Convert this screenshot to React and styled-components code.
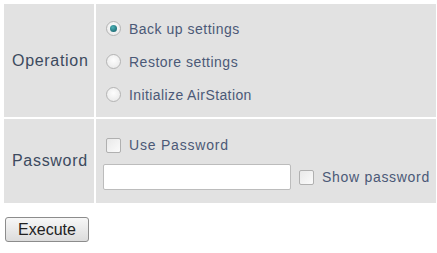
import styled, { createGlobalStyle } from "styled-components"

const Global = createGlobalStyle`
    html, body {
        margin: 0;
        padding: 0;
        background: #fff;
        font-family: "Liberation Sans", Arial, sans-serif;
    }
`

const Page = styled.div`
    padding: 4px 0 0 4px;
`

const Form = styled.div`
    display: grid;
    grid-template-columns: 90px 1fr;
    grid-template-rows: 113px 84px;
    gap: 2px;
    width: 432px;
`

const Label = styled.div`
    background: #e2e2e2;
    display: flex;
    align-items: center;
    padding-left: 8px;
    font-size: 16px;
    letter-spacing: 0.7px;
    color: #3c4a5e;
`

const Cell = styled.div`
    background: #e2e2e2;
    display: flex;
    flex-direction: column;
    padding: ${p => p.$pad};
`

const Option = styled.label`
    display: flex;
    align-items: center;
    height: ${p => p.$h || 33}px;
    padding-left: ${p => p.$indent || 0}px;
    font-size: 14px;
    letter-spacing: ${p => p.$ls || 0.5}px;
    white-space: nowrap;
    color: #4b5977;
    gap: 8px;
`

const Radio = styled.span`
    width: 13px;
    height: 13px;
    border-radius: 50%;
    border: 1px solid #b4b4b4;
    background: radial-gradient(circle at 50% 40%, #fdfdfd 0%, #e6e6e6 100%);
    display: flex;
    align-items: center;
    justify-content: center;
    flex-shrink: 0;
    &::after {
        content: "";
        width: 7px;
        height: 7px;
        border-radius: 50%;
        background: ${p => (p.$on ? "radial-gradient(circle at 40% 35%, #4fb3b8 0%, #14606a 90%)" : "transparent")};
    }
`

const Check = styled.span`
    width: 13px;
    height: 13px;
    border: 1px solid #b0b0b0;
    border-radius: 2px;
    background: linear-gradient(135deg, #e9e9e9 0%, #fbfbfb 100%);
    flex-shrink: 0;
`

const InputRow = styled.div`
    display: flex;
    align-items: center;
    margin-top: 7px;
`

const TextInput = styled.input`
    width: 188px;
    height: 26px;
    flex-shrink: 0;
    box-sizing: border-box;
    border: 1px solid #bcbcbc;
    border-radius: 2px;
    background: #fff;
    margin: 0 8px 0 0;
    padding: 0 4px;
    outline: none;
`

const Button = styled.button`
    margin-top: 14px;
    margin-left: 1px;
    width: 84px;
    height: 25px;
    border: 1px solid #8c8c8c;
    border-radius: 3px;
    background: linear-gradient(#f7f7f7, #dcdcdc);
    font-family: "Liberation Sans", Arial, sans-serif;
    font-size: 16px;
    color: #222;
    padding: 0;
`

export default function App() {
    return (
        <Page>
            <Global />
            <Form>
                <Label>Operation</Label>
                <Cell $pad="8px 10px 5px 10px">
                    <Option><Radio $on />Back up settings</Option>
                    <Option><Radio />Restore settings</Option>
                    <Option $ls={0.4}><Radio />Initialize AirStation</Option>
                </Cell>
                <Label>Password</Label>
                <Cell $pad="14px 0 0 7px">
                    <Option $h={24} $indent={3} $ls={0.8}><Check />Use Password</Option>
                    <InputRow>
                        <TextInput type="text" />
                        <Option $h={26} $ls={0.7}><Check />Show password</Option>
                    </InputRow>
                </Cell>
            </Form>
            <Button>Execute</Button>
        </Page>
    )
}
